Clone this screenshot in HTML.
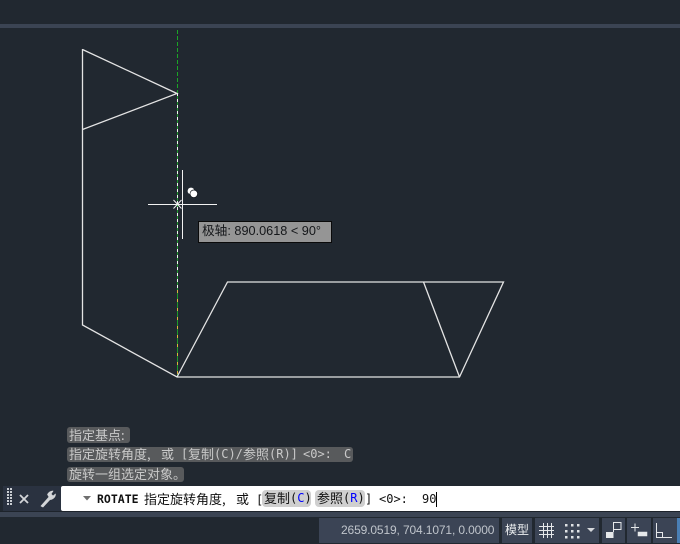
<!DOCTYPE html>
<html>
<head>
<meta charset="utf-8">
<style>
html,body{margin:0;padding:0;width:680px;height:544px;overflow:hidden;background:#212830}
.a{position:absolute}
.t{position:absolute;white-space:pre;font-family:"DejaVu Sans Mono",monospace;font-size:12px;line-height:16px}
.c{position:absolute;white-space:pre;font-family:"Noto Sans CJK SC",sans-serif;font-size:13px;line-height:16px}
.h{color:#c9c9c9}
.k{color:#111}
.bg{position:absolute;background:#585a5c;border-radius:3px}
.blk{background:#3b4455;position:absolute;top:518px;height:25px}
.pill{position:absolute;background:#cfcfcf;border-radius:4px;top:490px;height:17px}
.bl{color:#0000ff}
</style>
</head>
<body>
<div class="a" style="left:0;top:24px;width:680px;height:4px;background:#3b4453"></div>

<svg class="a" style="left:0;top:0" width="680" height="544" viewBox="0 0 680 544">
  <g shape-rendering="crispEdges">
    <line x1="177.500" y1="30" x2="177.500" y2="93" stroke="#1aa526" stroke-width="1" stroke-dasharray="4 2"/>
    <line x1="177.500" y1="93" x2="177.500" y2="377" stroke="#1c9a2a" stroke-width="1"/>
    <line x1="177.500" y1="93" x2="177.500" y2="290" stroke="#f0f0f0" stroke-width="1" stroke-dasharray="3 3"/>
    <line x1="177.500" y1="290" x2="177.500" y2="376" stroke="#e0b040" stroke-width="1" stroke-dasharray="3 6"/>
  </g>
  <g fill="none" stroke="#e4e4e4" stroke-width="1.300">
    <path d="M82.500 49.500 L177 93.500 L82.500 129.500"/>
    <path d="M82.500 49 L82.500 325 L177 377 L459.500 377 L503.500 282 L227.500 282 L177 377"/>
    <path d="M423.500 282 L459.500 377"/>
  </g>
  <g stroke="#f2f2f2" stroke-width="1" fill="none">
    <line x1="148" y1="204.500" x2="217" y2="204.500"/>
    <line x1="182.500" y1="170" x2="182.500" y2="239"/>
    <path d="M173.500 200 L181.500 208.500 M181.500 200 L173.500 208.500"/>
  </g>
  <circle cx="191" cy="191" r="3.400" fill="#fff"/>
  <circle cx="193.800" cy="193.800" r="3.800" fill="#fff" stroke="#10141a" stroke-width="0.700"/>
</svg>

<div class="a" style="left:198px;top:221px;width:132px;height:20px;background:#959595;border:1px solid #0a0a0a"></div>
<div class="a" style="left:202px;top:223px;white-space:pre;color:#15171a;font:12.700px/17px 'Liberation Sans','Noto Sans CJK SC',sans-serif">极轴: 890.0618 &lt; 90°</div>

<div class="bg" style="left:67px;top:427px;width:63px;height:16px"></div>
<div class="bg" style="left:67px;top:447px;width:286px;height:15px"></div>
<div class="bg" style="left:67px;top:467px;width:117px;height:15px"></div>

<div class="c h" style="left:69px;top:427px">指定基点:</div>

<div class="c h" style="left:69px;top:446px">指定旋转角度,</div>
<div class="c h" style="left:161px;top:446px">或</div>
<div class="t h" style="left:181px;top:446px">[</div>
<div class="c h" style="left:188px;top:446px">复制</div>
<div class="t h" style="left:214px;top:446px">(C)/</div>
<div class="c h" style="left:243px;top:446px">参照</div>
<div class="t h" style="left:269px;top:446px">(R)]</div>
<div class="t h" style="left:303px;top:446px">&lt;0&gt;:</div>
<div class="t h" style="left:344px;top:446px">C</div>

<div class="c h" style="left:69px;top:466px">旋转一组选定对象。</div>

<!-- command bar -->
<div class="a" style="left:3px;top:486px;width:58px;height:25px;background:#2a3240"></div>
<svg class="a" style="left:0;top:480px" width="62" height="34" viewBox="0 0 62 34">
  <g fill="#c9cdd2">
    <rect x="7" y="8" width="2" height="2"/><rect x="10" y="8" width="2" height="2"/>
    <rect x="7" y="11" width="2" height="2"/><rect x="10" y="11" width="2" height="2"/>
    <rect x="7" y="14" width="2" height="2"/><rect x="10" y="14" width="2" height="2"/>
    <rect x="7" y="17" width="2" height="2"/><rect x="10" y="17" width="2" height="2"/>
    <rect x="7" y="20" width="2" height="2"/><rect x="10" y="20" width="2" height="2"/>
    <rect x="7" y="23" width="2" height="2"/><rect x="10" y="23" width="2" height="2"/>
  </g>
  <path d="M20 15 L28 23 M28 15 L20 23" stroke="#d4d6d9" stroke-width="1.800" fill="none"/>
  <path d="M41 26 L49 17 L47.500 14.500 Q49 11.500 53 11 L51 14 L53 16 L55.500 14 Q55.500 18 51 19.500 L50 19.500 L43 27 Z" fill="#d4d6d9" stroke="#d4d6d9" stroke-width="0.700" stroke-linejoin="round"/>
</svg>
<div class="a" style="left:61px;top:486px;width:619px;height:25px;background:#fff;border-radius:2px 0 0 2px"></div>
<svg class="a" style="left:83px;top:496px" width="9" height="6"><path d="M0 0 H8 L4 4.500 Z" fill="#6f6f6f"/></svg>
<div class="pill" style="left:262px;width:49px"></div>
<div class="pill" style="left:315px;width:50px"></div>
<div class="t k" style="left:97px;top:491px;font:bold 11.500px/16px 'DejaVu Sans Mono',monospace">ROTATE</div>
<div class="c k" style="left:144px;top:491px">指定旋转角度,</div>
<div class="c k" style="left:236px;top:491px">或</div>
<div class="t k" style="left:256px;top:492px">[</div>
<div class="c k" style="left:264px;top:490px">复制</div>
<div class="t k" style="left:290px;top:490px">(<span class="bl">C</span>)</div>
<div class="c k" style="left:317px;top:490px">参照</div>
<div class="t k" style="left:343px;top:490px">(<span class="bl">R</span>)</div>
<div class="t k" style="left:365px;top:491px">]</div>
<div class="t k" style="left:379px;top:491px">&lt;0&gt;:</div>
<div class="t k" style="left:422px;top:491px">90</div>
<div class="a" style="left:436px;top:492px;width:1px;height:15px;background:#000"></div>

<div class="a" style="left:0;top:512px;width:680px;height:5px;background:#3b4453"></div>
<div class="a" style="left:0;top:511px;width:680px;height:1px;background:#1d232b"></div>

<!-- status bar -->
<div class="blk" style="left:319px;width:180px"></div>
<div class="blk" style="left:502px;width:30px"></div>
<div class="blk" style="left:535px;width:64px"></div>
<div class="blk" style="left:602px;width:23px"></div>
<div class="blk" style="left:627px;width:24px"></div>
<div class="blk" style="left:653px;width:24px"></div>
<div class="blk" style="left:677px;width:3px;background:#4a7fb5"></div>
<div class="a" style="left:341px;top:522px;white-space:pre;color:#bfc4cb;font:12px/16px 'Liberation Sans',sans-serif;letter-spacing:-0.130px">2659.0519, 704.1071, 0.0000</div>
<div class="a" style="left:505px;top:522px;white-space:pre;color:#eceef0;font:12px/16px 'Noto Sans CJK SC',sans-serif">模型</div>

<svg class="a" style="left:520px;top:510px" width="160" height="34" viewBox="0 0 160 34">
  <path d="M19 16.500 H34 M19 20.500 H34 M19 24.500 H34 M23.500 13 V28 M27.500 13 V28 M31.500 13 V28" stroke="#e6e8ea" stroke-width="1" fill="none"/>
  <g fill="#dfe2e5">
    <rect x="45" y="14" width="2.500" height="2.500"/><rect x="51" y="14" width="2.500" height="2.500"/><rect x="57" y="14" width="2.500" height="2.500"/>
    <rect x="45" y="20" width="2.500" height="2.500"/><rect x="51" y="20" width="2.500" height="2.500"/><rect x="57" y="20" width="2.500" height="2.500"/>
    <rect x="45" y="26" width="2.500" height="2.500"/><rect x="51" y="26" width="2.500" height="2.500"/><rect x="57" y="26" width="2.500" height="2.500"/>
  </g>
  <path d="M67 18 H75 L71 22 Z" fill="#d5d8dc"/>
  <rect x="86" y="22" width="7.500" height="6" fill="#e6e8ea"/>
  <path d="M93.500 22 V12.500 H101 V19.500 H93.500" fill="none" stroke="#e6e8ea" stroke-width="1"/>
  <path d="M111 17.500 H119 M115 13.500 V21.500" stroke="#e6e8ea" stroke-width="1" fill="none"/>
  <rect x="118" y="22" width="9" height="4" fill="#e6e8ea" stroke="#e6e8ea" stroke-width="0.500"/>
  <path d="M136.500 13 V27.500 H152 M136.500 22.500 H142.500 V27.500" stroke="#e6e8ea" stroke-width="1" fill="none"/>
</svg>
</body>
</html>
